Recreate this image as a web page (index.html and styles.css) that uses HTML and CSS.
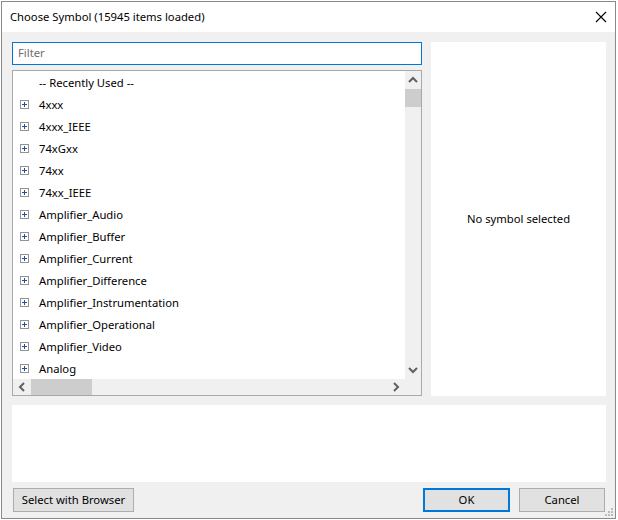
FILE: index.html
```html
<!DOCTYPE html>
<html>
<head>
<meta charset="utf-8">
<link rel="stylesheet" href="styles.css">
</head>
<body>
<div class="window">
  <div class="titlebar">
    <span class="title">Choose Symbol (15945 items loaded)</span>
    <svg class="close" width="12" height="12" viewBox="0 0 12 12"><path d="M1 1 L11 11 M11 1 L1 11" stroke="#000" stroke-width="1.1" fill="none"/></svg>
  </div>
  <div class="content">
    <div class="main">
      <div class="leftcol">
        <div class="filter">Filter</div>
        <div class="tree">
          <div class="treebody">
            <div class="rows">
              <div class="row"><span class="noexp"></span><span>-- Recently Used --</span></div>
              <div class="row"><svg class="exp" viewBox="0 0 9 9"><rect x="0.5" y="0.5" width="8" height="8" fill="#fff" stroke="#939393"/><path d="M2 4.5 H7 M4.5 2 V7" stroke="#2b4c9a"/></svg><span>4xxx</span></div>
              <div class="row"><svg class="exp" viewBox="0 0 9 9"><rect x="0.5" y="0.5" width="8" height="8" fill="#fff" stroke="#939393"/><path d="M2 4.5 H7 M4.5 2 V7" stroke="#2b4c9a"/></svg><span>4xxx_IEEE</span></div>
              <div class="row"><svg class="exp" viewBox="0 0 9 9"><rect x="0.5" y="0.5" width="8" height="8" fill="#fff" stroke="#939393"/><path d="M2 4.5 H7 M4.5 2 V7" stroke="#2b4c9a"/></svg><span>74xGxx</span></div>
              <div class="row"><svg class="exp" viewBox="0 0 9 9"><rect x="0.5" y="0.5" width="8" height="8" fill="#fff" stroke="#939393"/><path d="M2 4.5 H7 M4.5 2 V7" stroke="#2b4c9a"/></svg><span>74xx</span></div>
              <div class="row"><svg class="exp" viewBox="0 0 9 9"><rect x="0.5" y="0.5" width="8" height="8" fill="#fff" stroke="#939393"/><path d="M2 4.5 H7 M4.5 2 V7" stroke="#2b4c9a"/></svg><span>74xx_IEEE</span></div>
              <div class="row"><svg class="exp" viewBox="0 0 9 9"><rect x="0.5" y="0.5" width="8" height="8" fill="#fff" stroke="#939393"/><path d="M2 4.5 H7 M4.5 2 V7" stroke="#2b4c9a"/></svg><span>Amplifier_Audio</span></div>
              <div class="row"><svg class="exp" viewBox="0 0 9 9"><rect x="0.5" y="0.5" width="8" height="8" fill="#fff" stroke="#939393"/><path d="M2 4.5 H7 M4.5 2 V7" stroke="#2b4c9a"/></svg><span>Amplifier_Buffer</span></div>
              <div class="row"><svg class="exp" viewBox="0 0 9 9"><rect x="0.5" y="0.5" width="8" height="8" fill="#fff" stroke="#939393"/><path d="M2 4.5 H7 M4.5 2 V7" stroke="#2b4c9a"/></svg><span>Amplifier_Current</span></div>
              <div class="row"><svg class="exp" viewBox="0 0 9 9"><rect x="0.5" y="0.5" width="8" height="8" fill="#fff" stroke="#939393"/><path d="M2 4.5 H7 M4.5 2 V7" stroke="#2b4c9a"/></svg><span>Amplifier_Difference</span></div>
              <div class="row"><svg class="exp" viewBox="0 0 9 9"><rect x="0.5" y="0.5" width="8" height="8" fill="#fff" stroke="#939393"/><path d="M2 4.5 H7 M4.5 2 V7" stroke="#2b4c9a"/></svg><span>Amplifier_Instrumentation</span></div>
              <div class="row"><svg class="exp" viewBox="0 0 9 9"><rect x="0.5" y="0.5" width="8" height="8" fill="#fff" stroke="#939393"/><path d="M2 4.5 H7 M4.5 2 V7" stroke="#2b4c9a"/></svg><span>Amplifier_Operational</span></div>
              <div class="row"><svg class="exp" viewBox="0 0 9 9"><rect x="0.5" y="0.5" width="8" height="8" fill="#fff" stroke="#939393"/><path d="M2 4.5 H7 M4.5 2 V7" stroke="#2b4c9a"/></svg><span>Amplifier_Video</span></div>
              <div class="row"><svg class="exp" viewBox="0 0 9 9"><rect x="0.5" y="0.5" width="8" height="8" fill="#fff" stroke="#939393"/><path d="M2 4.5 H7 M4.5 2 V7" stroke="#2b4c9a"/></svg><span>Analog</span></div>
            </div>
            <div class="vscroll">
              <svg class="arrow" width="16" height="17" viewBox="0 0 16 17"><path d="M4 11 L8 7 L12 11" stroke="#606060" stroke-width="2" fill="none"/></svg>
              <div class="vthumb"></div>
              <div class="vfill"></div>
              <svg class="arrow" width="16" height="17" viewBox="0 0 16 17"><path d="M4 6 L8 10 L12 6" stroke="#606060" stroke-width="2" fill="none"/></svg>
            </div>
          </div>
          <div class="hscroll">
            <svg class="arrow" width="17" height="16" viewBox="0 0 17 16"><path d="M11 4 L7 8 L11 12" stroke="#606060" stroke-width="2" fill="none"/></svg>
            <div class="hthumb"></div>
            <div class="hfill"></div>
            <svg class="arrow" width="17" height="16" viewBox="0 0 17 16"><path d="M6 4 L10 8 L6 12" stroke="#606060" stroke-width="2" fill="none"/></svg>
            <div class="corner"></div>
          </div>
        </div>
      </div>
      <div class="preview">No symbol selected</div>
    </div>
    <div class="details"></div>
    <div class="buttons">
      <button class="btn browse">Select with Browser</button>
      <div class="spacer"></div>
      <button class="btn ok">OK</button>
      <button class="btn cancel">Cancel</button>
    </div>
  </div>
  <div class="grip">
    <svg width="9" height="9" viewBox="0 0 9 9" fill="#bcbcbc"><rect x="6" y="0" width="2" height="2"/><rect x="3" y="3" width="2" height="2"/><rect x="6" y="3" width="2" height="2"/><rect x="0" y="6" width="2" height="2"/><rect x="3" y="6" width="2" height="2"/><rect x="6" y="6" width="2" height="2"/></svg>
  </div>
</div>
</body>
</html>
```
FILE: styles.css
```css
html, body {
  margin: 0;
  padding: 0;
  background: #ffffff;
}
body {
  font-family: "Noto Sans", "Open Sans", sans-serif;
  font-size: 11.25px;
  color: #000;
}
.window {
  position: relative;
  margin: 1px 0 0 1px;
  width: 615px;
  height: 518px;
  box-sizing: border-box;
  border: 1px solid #8a8a8a;
  background: #f0f0f0;
  display: flex;
  flex-direction: column;
}
.titlebar {
  height: 30px;
  background: #ffffff;
  display: flex;
  align-items: center;
  padding-left: 8px;
  padding-right: 7px;
  flex: none;
}
.title {
  flex: 1;
  font-size: 11.25px;
  line-height: 16px;
}
.close {
  display: block;
  margin-right: 1px;
}
.content {
  padding: 10px 9px 0 10px;
  display: flex;
  flex-direction: column;
  flex: 1;
}
.main {
  display: flex;
  height: 354px;
  gap: 9px;
}
.leftcol {
  width: 410px;
  display: flex;
  flex-direction: column;
  gap: 5px;
}
.filter {
  height: 23px;
  box-sizing: border-box;
  border: 1px solid #0078d7;
  background: #fff;
  color: #6d6d6d;
  padding-left: 5px;
  line-height: 20px;
}
.tree {
  flex: 1;
  box-sizing: border-box;
  border: 1px solid #a9a9a9;
  background: #fff;
  display: flex;
  flex-direction: column;
  overflow: hidden;
}
.treebody {
  flex: 1;
  display: flex;
  overflow: hidden;
}
.rows {
  flex: 1;
  overflow: hidden;
}
.row {
  height: 22px;
  display: flex;
  align-items: center;
  padding-left: 7px;
  white-space: nowrap;
}
.exp, .noexp {
  width: 9px;
  height: 9px;
  margin-right: 10px;
  flex: none;
  display: block;
}
.vscroll {
  width: 16px;
  background: #f0f0f0;
  display: flex;
  flex-direction: column;
  flex: none;
}
.vthumb {
  height: 18px;
  margin-top: 1px;
  background: #cdcdcd;
}
.vfill {
  flex: 1;
}
.arrow {
  display: block;
  flex: none;
}
.hscroll {
  height: 16px;
  background: #f0f0f0;
  display: flex;
  flex: none;
}
.hthumb {
  width: 61px;
  margin-left: 1px;
  background: #cdcdcd;
}
.hfill {
  flex: 1;
}
.corner {
  width: 16px;
  background: #f0f0f0;
}
.preview {
  flex: 1;
  background: #fff;
  display: flex;
  align-items: center;
  justify-content: center;
  padding-bottom: 2px;
  box-sizing: border-box;
}
.details {
  margin-top: 9px;
  height: 77px;
  background: #fff;
}
.buttons {
  display: flex;
  margin-top: 6px;
  align-items: flex-start;
}
.spacer {
  flex: 1;
}
.btn {
  height: 24px;
  box-sizing: border-box;
  border: 1px solid #adadad;
  background: #e1e1e1;
  font-family: "Noto Sans", "Open Sans", sans-serif;
  font-size: 11.25px;
  color: #000;
  padding: 0;
  line-height: 20px;
}
.browse {
  width: 121px;
  margin-left: 1px;
}
.ok {
  width: 87px;
  border: 2px solid #0078d7;
  margin-right: 9px;
}
.cancel {
  width: 86px;
  margin-right: 1px;
}
.grip {
  position: absolute;
  right: 1px;
  bottom: 1px;
  line-height: 0;
}
```
